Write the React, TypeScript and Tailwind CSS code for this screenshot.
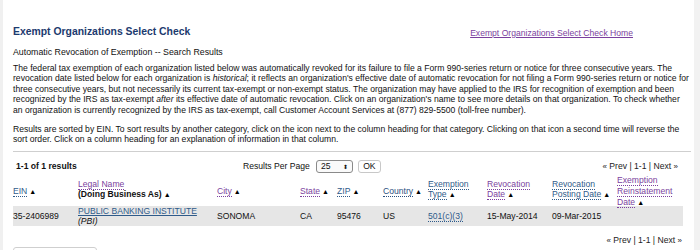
const P = "text-[#7b3f9e]";
const B = "text-[#2f5b8a]";
const COLS = "grid grid-cols-[65px_139px_83px_37px_46px_45px_59px_65px_65px_66px] items-center";

function Sort() {
  return <span className="text-[7px] text-black ml-[2px]">▲</span>;
}

function HLink({ c, children }: { c: string; children: React.ReactNode }) {
  return <span className={`${c} border-b border-dotted border-current`}>{children}</span>;
}

function Pager() {
  return (
    <span className="text-[#222]">
      <span className="text-[8px]">«</span> Prev | 1-1 | Next <span className="text-[8px]">»</span>
    </span>
  );
}

export default function App() {
  return (
    <div className="w-[700px] h-[250px] overflow-hidden flex bg-white font-['Liberation_Sans',Arial,sans-serif] text-[#111]">
      <div className="w-[3px] bg-[#f0f0f0]" />
      <div className="w-[691px] pl-[10px] pr-[3px]">
        <div className="flex items-end justify-between pt-[25px]">
          <h1 className="text-[10.4px] leading-[14px] font-bold text-[#1c3a6e]">Exempt Organizations Select Check</h1>
          <a className="text-[8.6px] leading-[12px] text-[#7b3f9e] underline mr-[58px]">Exempt Organizations Select Check Home</a>
        </div>
        <p className="text-[8.8px] leading-[12px] mt-[7px]">Automatic Revocation of Exemption -- Search Results</p>
        <div className="text-[8.6px] leading-[10.4px] mt-[5px]">
          <p>
            The federal tax exemption of each organization listed below was automatically revoked for its failure to file a Form 990-series return or notice for three consecutive years. The revocation date listed below for each organization is <i>historical</i>; it reflects an organization's effective date of automatic revocation for not filing a Form 990-series return or notice for three consecutive years, but not necessarily its current tax-exempt or non-exempt status. The organization may have applied to the IRS for recognition of exemption and been recognized by the IRS as tax-exempt <i>after</i> its effective date of automatic revocation. Click on an organization's name to see more details on that organization. To check whether an organization is currently recognized by the IRS as tax-exempt, call Customer Account Services at (877) 829-5500 (toll-free number).
          </p>
          <p className="mt-[9px]">
            Results are sorted by EIN. To sort results by another category, click on the icon next to the column heading for that category. Clicking on that icon a second time will reverse the sort order. Click on a column heading for an explanation of information in that column.
          </p>
        </div>
        <div className="h-px bg-[#cfcfcf] mt-[6px]" />
        <div className="flex items-center text-[8.6px] mt-[7px] h-[16px]">
          <span className="font-bold w-[230px] pl-[3px]">1-1 of 1 results</span>
          <span>Results Per Page</span>
          <span className="ml-[6px] w-[37px] h-[13px] border border-[#8a8a8a] rounded-[3px] flex items-center justify-between px-[4px] bg-[#fafafa]">
            25<span className="text-[6px] leading-[6px]">⬍</span>
          </span>
          <span className="ml-[5px] w-[23px] h-[13px] border border-[#c8c8c8] rounded-[3px] flex items-center justify-center bg-white">OK</span>
          <span className="ml-auto mr-[13px]"><Pager /></span>
        </div>
        <div className="text-[8.6px] w-[670px]">
          <div className={`${COLS} h-[31px] leading-[10px]`}>
            <div><HLink c={B}>EIN</HLink><Sort /></div>
            <div className="pb-[4px]">
              <HLink c={P}>Legal Name</HLink>
              <div className="font-bold">(Doing Business As)<Sort /></div>
            </div>
            <div><HLink c={P}>City</HLink><Sort /></div>
            <div><HLink c={P}>State</HLink><Sort /></div>
            <div><HLink c={B}>ZIP</HLink><Sort /></div>
            <div><HLink c="text-[#2b4f7e]">Country</HLink><Sort /></div>
            <div className="pb-[4px]">
              <HLink c={B}>Exemption</HLink>
              <div><HLink c={B}>Type</HLink><Sort /></div>
            </div>
            <div className="pb-[4px]">
              <HLink c={P}>Revocation</HLink>
              <div><HLink c={P}>Date</HLink><Sort /></div>
            </div>
            <div className="pb-[4px]">
              <HLink c={B}>Revocation</HLink>
              <div><HLink c={B}>Posting Date</HLink><Sort /></div>
            </div>
            <div className="leading-[11px]">
              <HLink c={P}>Exemption</HLink>
              <div><HLink c={P}>Reinstatement</HLink></div>
              <div><HLink c={P}>Date</HLink><Sort /></div>
            </div>
          </div>
          <div className={`${COLS} h-[20px] bg-[#e6e6e6] leading-[10px]`}>
            <div>35-2406989</div>
            <div>
              <span className="text-[#2f5b8a] underline">PUBLIC BANKING INSTITUTE</span>
              <div className="italic">(PBI)</div>
            </div>
            <div>SONOMA</div>
            <div>CA</div>
            <div>95476</div>
            <div>US</div>
            <div><span className="text-[#2f5b8a] border-b border-dotted border-current">501(c)(3)</span></div>
            <div>15-May-2014</div>
            <div>09-Mar-2015</div>
            <div />
          </div>
          <div className="flex justify-end mt-[8px] mr-[1px] leading-[12px]"><Pager /></div>
          <div className="w-[84px] h-[10px] border border-[#cfcfcf] rounded-[3px]" />
        </div>
      </div>
      <div className="flex-1 bg-[#f2f2f2]" />
    </div>
  );
}
